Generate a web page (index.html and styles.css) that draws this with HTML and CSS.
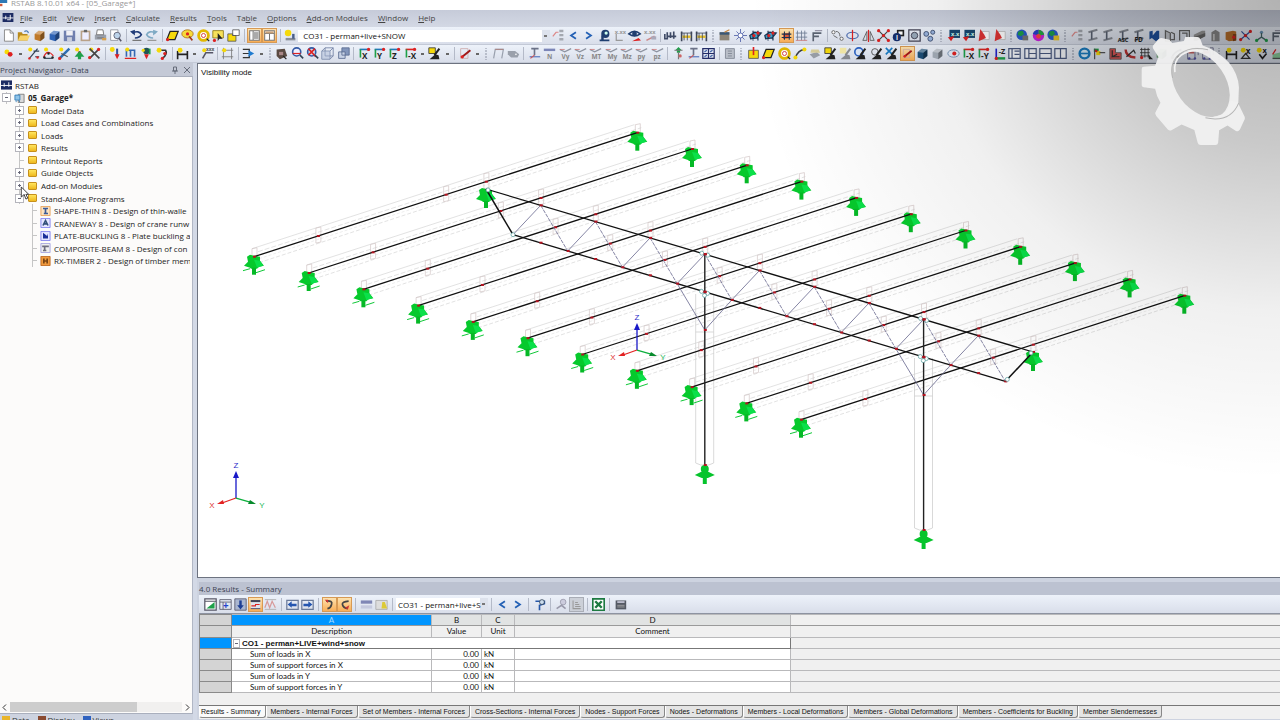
FILE: index.html
```html
<!DOCTYPE html>
<html lang="en">
<head>
    <meta charset="UTF-8">
    <title>RSTAB 8.10.01 x64 - [05_Garage*]</title>
    <link rel="stylesheet" href="styles.css">
</head>
<body>
    <div class="app">
        <header class="titlebar">
            <svg class="app-icon" viewBox="0 0 10 10"><path fill="#2f79b5" d="M0 0h9v5H0z"/><path fill="#d05a3c" d="M0 6h3v3H0z"/></svg>
            <span>RSTAB 8.10.01 x64 - [05_Garage*]</span>
        </header>

        <nav class="menubar">
            <svg class="logo" viewBox="0 0 12 10"><path fill="#1c2b63" d="M0 0h12v10H0z"/><path stroke="#fff" fill="none" d="M0 5.500h12M3.500 3v4M8.500 2v5M5 7.500h4"/></svg>
            <a href="#"><u>F</u>ile</a>
            <a href="#"><u>E</u>dit</a>
            <a href="#"><u>V</u>iew</a>
            <a href="#"><u>I</u>nsert</a>
            <a href="#"><u>C</u>alculate</a>
            <a href="#"><u>R</u>esults</a>
            <a href="#"><u>T</u>ools</a>
            <a href="#">Ta<u>b</u>le</a>
            <a href="#"><u>O</u>ptions</a>
            <a href="#"><u>A</u>dd-on Modules</a>
            <a href="#"><u>W</u>indow</a>
            <a href="#"><u>H</u>elp</a>
        </nav>

        <div class="toolbar" data-icons="new open cube:#c07a2a cube:#2d62b5 save paste print preview | undo redo | plane find ring select window | navigator* table* | loadcase">
            <select class="combo combo-main" aria-label="Load case">
                <option>CO31 - perman+live+SNOW</option>
            </select>
        </div>
        <div class="toolbar" data-icons="node v line poly member support delete | nodal memberload point moment | dim v value | grid | flow v : render zoom zoomred box boxes | axis:X axis:Y axis:Z axis:-X v edit v | pen v : frame tag | section label:N label:Vy label:Vz label:MT label:My label:Mz label:py label:pz | tree section quad | sheet : insert plane ring wire layers edit editpale editblue editdark editcross pen* solid solidpale eye axis:-X axis:-Y axisz layout1 layout2 layout3 layout4 : globe flag bend curve mesh greenbox slope pagered pagered : dim valuex valuev green"></div>

        <div class="workspace">
            <aside class="navigator">
                <h2 class="panel-title">Project Navigator - Data <button class="pin" aria-label="Auto hide"><svg viewBox="0 0 8 8"><path d="M2.500 1h3v4h-3zM1 5h6M4 5v3"/></svg></button><button class="pin" aria-label="Close"><svg viewBox="0 0 8 8"><path d="M1 1l6 6M7 1l-6 6"/></svg></button></h2>
                <ul class="tree">
                    <li class="level-0"><svg class="ico" viewBox="0 0 12 10"><path fill="#1c2b63" d="M0 0h12v10H0z"/><path stroke="#fff" fill="none" d="M0 5.500h12M3.500 3v4M8.500 2v5"/></svg>RSTAB</li>
                    <li class="level-1"><i class="toggle open"></i><svg class="ico" viewBox="0 0 12 12"><path fill="#d9d9d9" stroke="#777" d="M4.500 1.500h7v10h-7z"/><path fill="#8fc3e8" stroke="#2f79b5" d="M.5 2.500h6v6h-6zM2 11v-2M6 11v-2"/></svg><b>05_Garage*</b></li>
                    <li class="level-2"><i class="toggle"></i><i class="folder"></i>Model Data</li>
                    <li class="level-2"><i class="toggle"></i><i class="folder"></i>Load Cases and Combinations</li>
                    <li class="level-2"><i class="toggle"></i><i class="folder"></i>Loads</li>
                    <li class="level-2"><i class="toggle"></i><i class="folder"></i>Results</li>
                    <li class="level-2"><i class="toggle none"></i><i class="folder"></i>Printout Reports</li>
                    <li class="level-2"><i class="toggle"></i><i class="folder"></i>Guide Objects</li>
                    <li class="level-2"><i class="toggle"></i><i class="folder"></i>Add-on Modules</li>
                    <li class="level-2"><i class="toggle open"></i><i class="folder"></i>Stand-Alone Programs</li>
                    <li class="level-3"><i class="toggle none"></i><svg class="ico" viewBox="0 0 12 12"><path fill="#fbe3c4" stroke="#e79a4a" d="M.5.5h11v11H.5z"/><path stroke="#3d5b96" stroke-width="2" fill="none" d="M3 3h6M6 3v6M4 9h5"/></svg>SHAPE-THIN 8 - Design of thin-walle</li>
                    <li class="level-3"><i class="toggle none"></i><svg class="ico" viewBox="0 0 12 12"><path fill="#e6e6ff" stroke="#7777ee" d="M.5.5h11v11H.5z"/><path stroke="#33507a" stroke-width="2" fill="none" d="M3 9l3-6 3 6M4 7h4"/></svg>CRANEWAY 8 - Design of crane runw</li>
                    <li class="level-3"><i class="toggle none"></i><svg class="ico" viewBox="0 0 12 12"><path fill="#e6e6ff" stroke="#7777ee" d="M.5.5h11v11H.5z"/><path fill="#1b2f9a" d="M3 2l5 4 1-3v6H3z"/></svg>PLATE-BUCKLING 8 - Plate buckling a</li>
                    <li class="level-3"><i class="toggle none"></i><svg class="ico" viewBox="0 0 12 12"><path fill="#eee" stroke="#9a9add" d="M.5.5h11v11H.5z"/><path stroke="#6e6e80" stroke-width="2" fill="none" d="M2 4h8M5 4v5M3 9h4"/></svg>COMPOSITE-BEAM 8 - Design of con</li>
                    <li class="level-3"><i class="toggle none"></i><svg class="ico" viewBox="0 0 12 12"><path fill="#f09a3e" stroke="#b85f14" d="M.5.5h11v11H.5z"/><path stroke="#7a4413" stroke-width="2" fill="none" d="M4 3v6M8 3v6M3 6h6"/></svg>RX-TIMBER 2 - Design of timber mem</li>
                </ul>
                <div class="scroll">
                    <svg viewBox="0 0 8 8"><path d="M5 1L2 4l3 3"/></svg>
                    <div class="track"><div class="thumb"></div></div>
                    <svg viewBox="0 0 8 8"><path d="M3 1l3 3-3 3"/></svg>
                </div>
                <div class="nav-tabs">
                    <a href="#"><i class="dot yellow"></i>Data</a>
                    <a href="#"><i class="dot brown"></i>Display</a>
                    <a href="#"><i class="dot blue"></i>Views</a>
                </div>
                <svg class="cursor" viewBox="0 0 10 15"><path fill="#fff" stroke="#333" d="M1 1v11l3-3 2 5 2-1-2-4h3z"/></svg>
            </aside>

            <main class="content">
                <div class="viewport">
                    <svg id="model" viewBox="198 64 1082 512" preserveAspectRatio="xMinYMin meet"></svg>
                </div>

                <section class="results">
                    <h2 class="panel-title">4.0 Results - Summary</h2>
                    <div class="toolbar results-bar" data-icons="chart plus arrowdown diagram* wave | prev next | jump* back* | rows lamp |">
                        <select class="combo combo-small" aria-label="Result case">
                            <option>CO31 - perman+live+S</option>
                        </select>
                    </div>
                    <div class="grid-wrap">
                        <table class="grid">
                            <colgroup>
                                <col class="c-head"><col class="c-desc"><col class="c-value"><col class="c-unit"><col class="c-comment"><col>
                            </colgroup>
                            <thead>
                                <tr class="letters"><th></th><th class="current">A</th><th>B</th><th>C</th><th>D</th><td></td></tr>
                                <tr class="names"><th></th><th>Description</th><th>Value</th><th>Unit</th><th>Comment</th><td></td></tr>
                            </thead>
                            <tbody>
                                <tr class="group"><th class="current"></th><td colspan="4"><i class="toggle open"></i>CO1 - perman+LIVE+wind+snow</td><td></td></tr>
                                <tr><th></th><td>Sum of loads in X</td><td>0.00</td><td>kN</td><td></td><td></td></tr>
                                <tr><th></th><td>Sum of support forces in X</td><td>0.00</td><td>kN</td><td></td><td></td></tr>
                                <tr><th></th><td>Sum of loads in Y</td><td>0.00</td><td>kN</td><td></td><td></td></tr>
                                <tr><th></th><td>Sum of support forces in Y</td><td>0.00</td><td>kN</td><td></td><td></td></tr>
                            </tbody>
                        </table>
                    </div>
                    <div class="tabs">
                        <button class="active">Results - Summary</button>
                        <button>Members - Internal Forces</button>
                        <button>Set of Members - Internal Forces</button>
                        <button>Cross-Sections - Internal Forces</button>
                        <button>Nodes - Support Forces</button>
                        <button>Nodes - Deformations</button>
                        <button>Members - Local Deformations</button>
                        <button>Members - Global Deformations</button>
                        <button>Members - Coefficients for Buckling</button>
                        <button>Member Slendernesses</button>
                    </div>
                </section>
            </main>
        </div>

        <div class="shade"></div>
        <svg class="gear" viewBox="0 0 310 325">
            <path fill="#f1f1f1" fill-opacity=".94" fill-rule="evenodd" d="M36 25L53 6Q58 1 65 4L85 8 93 18 128 12 132 0H168Q174 0 177 7L184 25Q225 38 262 76 290 110 292 150L290 198 309 238Q311 244 307 250L295 276Q290 284 283 280L258 264 233 278 230 315Q229 322 222 322H178Q171 322 169 315L159 277 121 261 92 277Q86 281 80 276L46 236Q40 228 44 223L58 196Q46 176 42 154L8 150Q2 149 2 144V96Q2 89 8 89L42 86 52 60 36 34Q34 29 36 25ZM115 50A78 110 -35 0 0 241 230A78 110 -35 0 0 115 50Z"/>
            <path fill="none" stroke="#b4b4b4" stroke-width="3" d="M94 122C80 60 130 22 200 38M291 197C276 234 245 252 192 241"/>
            <path fill="none" stroke="#f1f1f1" stroke-width="5" d="M101 105C95 60 130 34 185 42"/>
            <path fill="#f1f1f1" d="M289 195Q268 243 215 237 262 235 267 190z"/>
        </svg>
    </div>
    <script src="script.js"></script>
</body>
</html>
```

FILE: styles.css
```css
* {
    box-sizing: border-box;
}

body {
    margin: 0;
    font-family: "Open Sans", "Noto Sans", sans-serif;
    font-size: 8px;
    color: #222;
    background: #cdd3e0;
}

button {
    padding: 0;
    border: none;
    background: none;
    font: inherit;
    color: inherit;
}

.app {
    position: relative;
    display: flex;
    flex-direction: column;
    height: 100vh;
    overflow: hidden;
}

.titlebar {
    display: flex;
    align-items: center;
    gap: 3px;
    flex: none;
    height: 10px;
    line-height: 4px;
    font-size: 8px;
    color: #999;
    background: #fff;
    overflow: hidden;
}

.titlebar span {
    margin-top: -5px;
}

.app-icon {
    width: 8px;
    height: 8px;
    margin-top: -5px;
}

.menubar {
    display: flex;
    align-items: center;
    gap: 10px;
    flex: none;
    height: 17px;
    padding: 0 0 2px 2px;
    background: linear-gradient(#c6cbd9, #d3d8e4);
}

.menubar a {
    color: #444;
    text-decoration: none;
    white-space: nowrap;
}

.menubar .logo {
    width: 12px;
    height: 9px;
    margin-right: -4px;
}

.toolbar {
    display: flex;
    justify-content: space-between;
    align-items: center;
    flex: none;
    height: 18px;
    margin-right: -5px;
    padding-left: 1px;
    background: linear-gradient(#edf2fa, #d9deea);
    border-bottom: 1px solid #c3c9d6;
}

.tool {
    flex: none;
    width: 15px;
    height: 15px;
    padding: 1px;
}

.tool svg {
    display: block;
    width: 13px;
    height: 13px;
    overflow: visible;
}

.tool.on {
    background: linear-gradient(#fde3b0, #f9ae57);
    border: 1px solid #d79a54;
    padding: 1px;
}

.tool.pressed {
    background: #ccd0d8;
    border: 1px solid #a9adb6;
    padding: 1px;
}

.tool.on svg,
.tool.pressed svg {
    width: 11px;
    height: 11px;
}

.arrow {
    flex: none;
    width: 9px;
    height: 2px;
    background: linear-gradient(#666, #666) center / 3px 2px no-repeat;
}

.sep {
    flex: none;
    width: 5px;
    height: 13px;
    background: linear-gradient(#b4bac8, #b4bac8) center / 1px 100% no-repeat;
}

.grip {
    flex: none;
    width: 8px;
    height: 12px;
    background: radial-gradient(circle, #8d93a3 1px, transparent 1px) center / 8px 3px;
}

.combo {
    flex: none;
    height: 12px;
    padding: 0 2px;
    font: inherit;
    color: #111;
    border: none;
    border-radius: 0;
    appearance: none;
    background: linear-gradient(#777, #777) right 3px center / 3px 2px no-repeat, linear-gradient(#dde2ec, #dde2ec) right / 8px 100% no-repeat #fff;
}

.combo-main {
    width: 252px;
    padding-left: 5px;
}

.combo-small {
    width: 92px;
}

.workspace {
    display: flex;
    flex: 1;
    min-height: 0;
}

.panel-title {
    display: flex;
    align-items: center;
    gap: 4px;
    flex: none;
    height: 13px;
    margin: 0;
    font-size: 8px;
    font-weight: normal;
    color: #3c4353;
    background: #bcc2d1;
}

.navigator {
    position: relative;
    display: flex;
    flex-direction: column;
    flex: none;
    width: 197px;
    border-right: 4px solid #d3d9e6;
    overflow: hidden;
}

.navigator .panel-title {
    background: #c4c9d6;
}

.pin {
    width: 8px;
    height: 8px;
}

.pin:first-of-type {
    margin-left: auto;
}

.pin:last-of-type {
    margin-right: 2px;
}

.pin svg {
    display: block;
    fill: none;
    stroke: #666c7a;
}

.tree {
    display: grid;
    grid-template-rows: repeat(15, 1fr);
    height: 188px;
    margin: 0;
    padding: 2px 0 0;
    list-style: none;
    box-sizing: content-box;
    background: #fcfbfa;
    border-right: 1px solid #b1b7c5;
    border-top: 1px solid #a9afbd;
}

.tree li {
    display: flex;
    align-items: center;
    gap: 3px;
    margin-right: 2px;
    overflow: hidden;
    white-space: nowrap;
}

.level-0 {
    padding-left: 1px;
}

.level-1 {
    padding-left: 2px;
}

.level-2 {
    padding-left: 15px;
}

.level-3 {
    padding-left: 28px;
}

.ico {
    flex: none;
    width: 11px;
    height: 10px;
}

.folder {
    flex: none;
    width: 9px;
    height: 8px;
    margin: 0 1px;
    border: 1px solid #c6901c;
    border-radius: 1px;
    background: linear-gradient(#ffe55e, #efb81d);
}

.toggle {
    display: flex;
    align-items: center;
    justify-content: center;
    flex: none;
    width: 9px;
    height: 100%;
    background: linear-gradient(#c5c5c5, #c5c5c5) 4px 0 / 1px 100% no-repeat, linear-gradient(#c5c5c5, #c5c5c5) right center / 5px 1px no-repeat;
}

.toggle::before {
    content: "";
    width: 7px;
    height: 7px;
    border: 1px solid #b5b5bc;
    background: linear-gradient(#667, #667) center / 3px 1px no-repeat, linear-gradient(#667, #667) center / 1px 3px no-repeat #fff;
}

.toggle.open::before {
    background: linear-gradient(#667, #667) center / 3px 1px no-repeat #fff;
}

.toggle.none::before {
    display: none;
}

.scroll {
    display: flex;
    align-items: flex-end;
    flex: 1;
    padding-bottom: 1px;
    background: #fcfbfa;
    border-right: 1px solid #b1b7c5;
    border-bottom: 1px solid #a9afbd;
}

.scroll svg {
    width: 8px;
    height: 9px;
    fill: none;
    stroke: #333;
    margin: 0 1px;
}

.track {
    flex: 1;
    height: 10px;
    background: #f1f0ef;
}

.thumb {
    width: 74%;
    height: 100%;
    background: #cdcdcd;
}

.nav-tabs {
    display: flex;
    gap: 8px;
    height: 6px;
    padding-left: 2px;
    line-height: 12px;
    overflow: hidden;
}

.nav-tabs a {
    display: flex;
    gap: 2px;
    color: #333;
    text-decoration: none;
}

.dot {
    width: 8px;
    height: 6px;
    margin-top: 2px;
}

.yellow { background: #e9b52a; }
.brown { background: #8a4a30; }
.blue { background: #2f62c0; }

.cursor {
    position: absolute;
    left: 20px;
    top: 123px;
    width: 10px;
    height: 14px;
}

.content {
    display: flex;
    flex-direction: column;
    flex: 1;
    min-width: 0;
}

.viewport {
    flex: 1;
    min-height: 0;
    background: #fff;
    border: 1px solid #6d7380;
    border-width: 1px 0 1px 1px;
}

.viewport svg {
    display: block;
    width: 100%;
    height: 100%;
}

.results {
    flex: none;
    padding-top: 4px;
    padding-left: 2px;
    font-family: "Liberation Sans", Arial, sans-serif;
}

.results .panel-title {
    font-family: "Open Sans", sans-serif;
}

.results-bar {
    justify-content: flex-start;
    height: 19px;
    padding-left: 4px;
    font-family: "Open Sans", sans-serif;
    border-bottom: 1px solid #8d93a1;
}

.results-bar .sep {
    width: 7px;
}

.grid-wrap {
    height: 91px;
    background: #f0f0f0;
}

.grid {
    width: 100%;
    table-layout: fixed;
    border-collapse: collapse;
    font-family: Lato, "Liberation Sans", sans-serif;
    color: #111;
}

.c-head { width: 32px; }
.c-desc { width: 200px; }
.c-value { width: 50px; }
.c-unit { width: 33px; }
.c-comment { width: 276px; }

.grid tr {
    height: 11px;
}

.grid th,
.grid td {
    padding: 0;
    line-height: 9px;
    font-weight: normal;
    white-space: nowrap;
    border: 1px solid #b9b9bb;
}

.grid tbody td {
    background: #fff;
}

.grid tr td:last-child {
    background: none;
    border-right: none;
}

.grid .letters th,
.grid .letters td {
    background: #e1e3e3;
    border-bottom-color: #9a9a9a;
}

.grid .names th {
    background: #f0f0f0;
    padding: 1px 0;
}

.grid th:first-child {
    background: #d4d4d4;
    border-color: #8a8a8a;
}

.grid .letters th.current {
    color: #a8dcff;
    background: #0095ff;
}

.grid th.current:first-child {
    background: #0095ff;
}

.grid tbody td:nth-child(2) {
    padding-left: 18px;
}

.grid tbody td:nth-child(3) {
    padding-right: 2px;
    text-align: right;
}

.grid tbody td:nth-child(4) {
    padding-left: 2px;
}

.grid .group td:nth-child(2) {
    padding-left: 1px;
    font-family: "Liberation Sans", Arial, sans-serif;
    font-weight: bold;
    border-color: #777;
}

.group .toggle {
    display: inline-flex;
    width: 7px;
    height: 7px;
    margin-right: 2px;
    background: none;
    vertical-align: middle;
}

.tabs {
    display: flex;
    height: 15px;
    padding-bottom: 2px;
    font-size: 7px;
    background: linear-gradient(#f0f0f0, #f0f0f0) top / 100% 13px no-repeat;
    border-top: 1px solid #777;
}

.tabs button {
    flex: none;
    height: 12px;
    padding: 0 4px;
    white-space: nowrap;
    color: #111;
    background: #e4e4e4;
    border: 1px solid #888;
    border-top: none;
    border-left-color: #fff;
    border-radius: 0 0 3px 3px;
}

.tabs .active {
    padding-left: 1px;
    background: #fafafa;
}

/* soft darkening toward the top right corner */
.shade {
    position: absolute;
    inset: 0;
    pointer-events: none;
    background: radial-gradient(ellipse 530px 480px at 100% 0, rgba(0, 0, 0, .3), rgba(0, 0, 0, .21) 30%, rgba(0, 0, 0, .06) 65%, transparent);
}

.gear {
    position: absolute;
    top: 37px;
    right: 35px;
    width: 104px;
    height: 109px;
    pointer-events: none;
}
```

FILE: script.js
```js
// path helpers for the 16x16 toolbar icons
const f = (c, d) => `<path fill="${c}" d="${d}"/>`;
const s = (c, d, w = 1.5) => `<path fill="none" stroke="${c}" stroke-width="${w}" d="${d}"/>`;
const t = (c, x, y, txt, size = 9) => `<text x="${x}" y="${y}" font-size="${size}" font-weight="bold" fill="${c}">${txt}</text>`;
const dots = (c, pts, r = 2) => pts.map(p => `<circle cx="${p[0]}" cy="${p[1]}" r="${r}" fill="${c}"/>`).join('');

const red = '#d22', yel = '#f5d90a', dk = '#222', gry = '#8a8f98', grn = '#1fa04a';
const pen = f(dk, 'M3 14l6-5 4 1 1 5H2z') + s(dk, 'M14 2L8 10', 2.500);
const beam = s(gry, 'M3 4l11-3M3 14l11-3', 2.500) + s('#5a6373', 'M7 3v10', 2);
const cube = c => f(c, 'M2 6l5-4 7 1v8l-5 4-7-2z') + f('rgba(0,0,0,.35)', 'M9 7l5-4v8l-5 4z') + f('rgba(255,255,255,.35)', 'M2 6l5-4 7 1-5 4z');
const globe = c => `<circle cx="7" cy="7" r="6.500" fill="#2a5bd0"/>` + f(grn, 'M3 3l5-1 2 4-4 3-4-2z') + f(c, 'M8 8h7v6H8z');
const layout = d => f('#f4f6fa', 'M1 2h14v12H1z') + s('#4b5a80', 'M1 2h14v12H1z' + d);

const icons = {
    new: f('#fff', 'M3 1h7l4 4v10H3z') + s('#777', 'M3 1h7l4 4v10H3zM10 1v4h4', 1),
    open: f('#b98a1c', 'M1 4h5l1 2h6v8H1z') + f('#f7d268', 'M4 8h12l-3 6H1z') + s('#4a78b0', 'M9 3q4-2 5 2'),
    cube: cube,
    save: f('#6f7fae', 'M1 2h14v13H1z') + f('#f0f0f5', 'M4 2h8v6H4z') + f('#c8cedd', 'M5 10h6v5H5z'),
    paste: f('#b9a188', 'M2 2h12v13H2z') + f('#eef', 'M4 4h8v9H4z') + f('#666', 'M6 1h4v3H6z'),
    print: f('#9aa0ab', 'M1 7h14v6H1z') + f('#fff', 'M4 1h7l1 6H3z') + s('#666', 'M4 1h7l1 6H3zM4 11h8', 1) + f('#d8a04c', 'M10 11h5v3h-5z'),
    preview: f('#fff', 'M2 1h9v13H2z') + s('#8a8f98', 'M2 1h9v13H2z', 1) + '<circle cx="10" cy="8" r="4" fill="#bdd4ea" stroke="#556"/>' + s('#556', 'M12 11l3 4', 2),
    undo: s('#1f3b78', 'M3 5q8-4 11 2-2 4-8 4', 2) + f('#1f3b78', 'M0 3l6-2v7z') + s('#777', 'M3 14h11'),
    redo: s('#7faac4', 'M13 5Q5 1 2 7q2 4 8 4', 2) + f('#7faac4', 'M16 3l-6-2v7z') + s('#999', 'M3 14h11'),
    plane: f(yel, 'M5 3h10l-4 10H1z') + s(dk, 'M5 3h10l-4 10H1z') + dots(red, [[2, 13]]),
    find: '<ellipse cx="8" cy="6" rx="7" ry="5" fill="#f7da3a" stroke="#a66a1c"/>' + s('#a23a18', 'M10 9l4 5', 2) + dots(red, [[8, 6]]),
    ring: '<circle cx="8" cy="8" r="6" fill="#fff" stroke="#e2b800" stroke-width="3.500"/><circle cx="8" cy="8" r="2.500" fill="none" stroke="#c22"/>' + s(dk, 'M12 12l3 3'),
    select: f('#f7e15a', 'M1 2h13v9H1z') + s('#8a7410', 'M1 2h13v9H1z', 1) + f(dk, 'M7 5l6 7H9l-2 3z') + dots(red, [[3, 14]]),
    window: f(yel, 'M1 6h10v9H1z') + f('#fff', 'M7 1h8v7H7z') + s('#555', 'M7 1h8v7H7zM1 6h6v2h4v7H1z', 1),
    navigator: f('#fff', 'M1 1h14v14H1z') + s('#777', 'M1 1h14v14H1zM6 1v14') + f('#aaa', 'M7 3h7v10H7z'),
    table: f('#fff', 'M1 1h14v14H1z') + s('#777', 'M1 1h14v14H1zM1 5h14M8 5v10') + f('#c9a27a', 'M2 2h12v3H2z'),
    loadcase: dots(yel, [[5, 5]], 4) + f(gry, 'M2 11h12v3H2z') + f('#4a5f8a', 'M10 6h3v6h-3z'),
    callout: s('#d88', 'M1 9l4-5h3') + f('#a4a8b0', 'M9 1h5v3H9zM9 6h5v3H9zM9 11h5v3H9z'),
    lt: s('#2461b5', 'M11 4L5 8l6 4', 2.200),
    gt: s('#2461b5', 'M5 4l6 4-6 4', 2.200),
    ball: dots('#1f3e70', [[9, 6]], 5) + f('#1f3e70', 'M2 13h12v2H2zM4 8h3v6H4z') + dots('#cfe', [[10, 5]]),
    xxx: s('#999', 'M4 6v8h8') + t('#999', 2, 6, 'x.xx', 7),
    eyered: s('#1f3e70', 'M1 6q7-6 14 0-7 5-14 0z', 2) + dots('#1f3e70', [[8, 6]], 3) + f(red, 'M5 15l8-4 3 3z'),
    xred: t('#999', 0, 6, 'x.xx', 7) + s('#c88', 'M3 14l10-5', 2) + f('#aab', 'M9 9h6v4H9z'),
    fork: s('#3f4b66', 'M1 6v6h3V4M8 4v7M12 3v9M5 9h10', 2),
    gridbar: f('#3e4658', 'M1 3h2v12H1zM13 3h2v12h-2z') + f('#e2bc2a', 'M3 8h10v3H3z') + s('#3e4658', 'M1 5h14M5 5v9M9 5v9', 1),
    image: f('#8d8577', 'M2 4h12v10H2z') + f('#3a5775', 'M2 4h12v3H2z') + s('#c7853b', 'M8 4l6-3'),
    snow: s('#4d5fa8', 'M8 0v16M0 8h16M3 3l10 10M13 3L3 13', 1) + '<circle cx="8" cy="8" r="3" fill="#fff" stroke="#4d5fa8"/>',
    plate: f('#3aa0c8', 'M1 8l6-4 8 1-5 6-8 1z') + s('#1c3350', 'M1 8l6-4 8 1-5 6-8 1zM5 2v12M11 2v12') + dots(red, [[6, 8], [11, 5]]),
    platered: f('#e05a3a', 'M3 5l10-1v8l-10 1z') + s('#1c3350', 'M1 6h14M1 11h14M5 2v12M12 2v12'),
    mesh2: s('#6d7b92', 'M3 2v12M8 2v12M12 2v12M1 5h14M1 10h14', 1) + s('#c77', 'M1 14h14', 1),
    pipe: s('#5b6472', 'M4 15V5h10M4 9h7', 2) + s('#99a', 'M6 2h9'),
    chain: '<circle cx="3" cy="4" r="2" fill="#fff" stroke="#555"/><circle cx="13" cy="12" r="2" fill="#fff" stroke="#555"/>' + s('#555', 'M6 3q5 0 5 6M3 8l5 3', 1),
    rotate: '<ellipse cx="8" cy="8" rx="7" ry="4" fill="none" stroke="#4a6cb0" stroke-width="1.500"/>' + s(red, 'M8 1v14'),
    mirror: s('#555', 'M6 3v11H1zM10 3v11h5z', 1) + s(red, 'M8 1v15'),
    cross: s('#444', 'M2 2l12 12M14 2L2 14') + dots(red, [[2, 2], [14, 2], [2, 14], [14, 14], [8, 8]], 2),
    info: f(dk, 'M6 1h9v8H6z') + f('#fff', 'M8 3h5v4H8z') + dots('#17306e', [[6, 10]], 5) + t('#fff', 5, 14, 'i', 8),
    target: s('#445', 'M1 1h14v14H1z') + '<circle cx="8" cy="8" r="4" fill="#9ab" stroke="#334"/>',
    nodes3: '<circle cx="4" cy="6" r="3" fill="#99b3dd" stroke="#346"/><circle cx="12" cy="4" r="2.500" fill="#99b3dd" stroke="#346"/><circle cx="9" cy="12" r="3" fill="#99b3dd" stroke="#346"/>',
    screen: f('#18476f', 'M3 1h13v10H3z') + t('#cfe', 5, 9, 'x.x', 7) + f(red, 'M1 10l8-1-4 6z'),
    pdf: f('#fff', 'M6 3h9v10H6z') + s('#bbb', 'M6 3h9v10H6z', 1) + f('#d33', 'M4 0l5 7 2 4-9 4z'),
    globe1: globe('#777'),
    globe2: '<circle cx="8" cy="8" r="7" fill="#c2d"/>' + f('#24c', 'M1 6q2-5 7-5v7z') + f('#2a4', 'M8 1q6 1 7 6l-7 1z') + dots('#f44', [[8, 9]], 3),
    globe3: globe('#e6c52a'),
    beam: beam,
    beamA: beam + t(dk, 1, 16, 'ASC', 7),
    beamF: beam + t(dk, 3, 16, 'FD', 8),
    bluebeam: f('#1c4f9c', 'M3 3l4-1v6l5-6h3v10l-4 3-5-4-3 2z'),
    prism: f('#c5c8ce', 'M3 3l7 3v8l-7 1z') + s('#666', 'M3 2v13h6V5zM10 4l4 2v7h-4', 1.500),
    channel: s('#666', 'M2 14V2h12v9M5 5h6v7', 1.500),
    log: f('#999', 'M1 7l10-5h4v7L5 14H1z') + f('#666', 'M1 10l14-5v4L5 14H1z'),
    bucket: f('#888', 'M3 4l5-3 5 3v11H3z') + f('#ccc', 'M5 6h2v8H5z'),
    timber: f('#b86f2c', 'M2 4l9-2 4 1v11l-9 1-4-2z') + f('#7f461a', 'M11 6h4v8l-4 1z') + dots(red, [[12, 10]]),
    joint: s('#33529e', 'M2 13L14 3M3 3l10 10') + dots(red, [[2, 13], [14, 3], [8, 8]]),
    tripod: dots('#6b94b8', [[8, 4]]) + s('#466', 'M8 5v5l-6 4M8 10l6 4') + dots(grn, [[2, 14], [14, 14]]),
    node: dots(yel, [[6, 6]], 3) + dots(red, [[10, 9]], 3),
    line: dots(yel, [[4, 3]], 2.500) + s('#345', 'M3 14L13 2M8 5h7M10 12h5') + dots(red, [[3, 14], [13, 13]], 1.500),
    poly: dots(yel, [[5, 3]], 2.500) + s(red, 'M2 13q4-12 12-2') + s('#456', 'M3 14h10') + dots(dk, [[3, 13], [13, 13], [8, 8]], 1.500),
    member: dots(yel, [[4, 3]], 2.500) + s('#2e6db0', 'M2 14L14 2', 3) + s('#555', 'M4 8l8 4') + dots(red, [[2, 14]]),
    support: dots(yel, [[5, 3]], 2.500) + dots(red, [[8, 7]]) + f(grn, 'M8 5l6 7h-4v3H6v-3H2z'),
    delete: dots(yel, [[4, 3]], 2.500) + s('#444', 'M2 2l12 12M14 2L2 14', 2) + dots(red, [[2, 13], [13, 3]]),
    nodal: dots(yel, [[4, 3]], 3) + s('#33529e', 'M10 2v10', 2.500) + f(red, 'M7 9h6l-3 6z'),
    memberload: s('#3668b2', 'M2 4h12M3 4v8M8 4v8M13 4v8', 2) + dots(yel, [[4, 3]], 2.500) + s(red, 'M1 14h14'),
    point: dots('#255', [[8, 5]], 4) + dots(yel, [[4, 4]]) + f(red, 'M5 9h6l-3 6z') + s(grn, 'M12 2v7', 2),
    moment: s('#333', 'M3 4h10q3 5-4 10', 2) + dots(yel, [[5, 4]], 3) + dots(red, [[9, 14], [12, 8]]),
    dim: s(dk, 'M2 5v10M14 5v10M2 9h12', 2) + dots(yel, [[5, 4]], 3),
    value: s('#556', 'M2 14l4-7h9', 2) + dots(yel, [[4, 4]], 2.500) + t('#555', 6, 5, 'xxx', 6),
    grid: s('#777', 'M3 1v14M13 1v14M1 4h14M1 12h14', 1) + dots(yel, [[4, 4]], 2.500),
    flow: s('#333', 'M1 3h8v3M1 13h8v-3M1 8h8') + f('#1e7bd0', 'M8 4l7 4-7 4z'),
    render: f('#5a4a42', 'M2 3l10-1 3 9-9 4-4-4z') + f('#a88', 'M5 6h5v4H5z') + s('#222', 'M10 11l4 4'),
    zoom: '<circle cx="7" cy="6" r="5" fill="#eef" stroke="#345aa5" stroke-width="2"/>' + s(red, 'M2 8h10') + s('#345', 'M11 10l4 4', 2),
    zoomred: '<circle cx="7" cy="6" r="5" fill="#cde" stroke="#345aa5" stroke-width="2"/>' + s(red, 'M3 2l9 10M11 2l-8 8', 2) + s('#345', 'M11 10l4 4', 2),
    box: s('#6c7ca0', 'M1 5h10v10H1zM5 1h10v10H5zM1 5l4-4M11 5l4-4M11 15l4-4', 1) + f('#a9b9d577', 'M1 5h10v10H1z'),
    boxes: f('#8396bb', 'M6 1h9v9H6z') + f('#c9d3e6', 'M2 6h8v8H2z') + s('#56698e', 'M6 1h9v9H6zM2 6h8v8H2z', 1),
    axis: n => s(n.startsWith('-') ? red : '#27b', 'M2 3h12', 2) + s(grn, 'M3 3v10', 2) + dots(red, [[13, 3]]) + t('#222', 5, 15, n, 10),
    axisz: s(grn, 'M4 14h11', 3) + s('#22c', 'M4 14V2', 2) + dots(red, [[4, 14]]) + t('#222', 7, 9, '-Z', 9),
    edit: f(yel, 'M1 1h8v7H1z') + s('#333', 'M1 1h8v7H1z', 1) + pen,
    editpale: f('#f5eaa8', 'M1 1h8v7H1z') + `<g opacity=".45">${pen}</g>`,
    editblue: '<circle cx="6" cy="6" r="5" fill="#dfeafa" stroke="#2b62c4" stroke-width="2"/>' + pen,
    editdark: '<circle cx="6" cy="6" r="4" fill="none" stroke="#444"/>' + pen,
    editcross: s('#1a7cc4', 'M1 1l8 8M9 1L1 9', 2) + pen,
    pen: s('#caa', 'M2 2h9v12H2z', 1) + s('#a01818', 'M4 12L14 4', 2.500) + dots(red, [[4, 12]]),
    frame: s('#9aa1ae', 'M2 14L4 3h10l-2 11', 1.500) + s('#a88', 'M4 3h10'),
    tag: f('#9aa0ab', 'M1 5h9l5 4-2 4H5L1 9z') + dots('#fff', [[11, 9]], 1),
    section: s('#6b7287', 'M4 2h9M8 2v8', 2) + s('#5a7ac0', 'M2 12h13') + s('#c55', 'M3 14l5-4'),
    label: n => (n == 'N' ? f('#7c86b8', 'M1 2h14v3H1z') : s('#8d93a0', 'M1 3l6 3 8-4') + s('#c77', 'M1 3h6', 1)) + t('#888', n == 'N' ? 5 : 3, 15, n, 8),
    tree: f(grn, 'M8 0l4 4h-2v3H6V4H4z') + s('#777', 'M3 4h10M8 6v9', 1.500) + dots('#c66', [[10, 11]]),
    quad: s('#222b66', 'M1 2h14v12H1zM8 2v12M1 8h14', 1.500) + s('#46a', 'M3 6l3-2M10 6l3-2M3 12l3-2M10 12l3-2', 1.500),
    sheet: f('#b9bec8', 'M3 2h11v12H3z') + s('#7a818f', 'M3 2h11v12H3zM6 5h5M6 8h5M6 11h5', 1),
    insert: f(yel, 'M2 4h12v10H2z') + s('#555', 'M2 4h12v10H2z', 1) + s(red, 'M8 0v10', 2),
    wire: s('#3b4048', 'M3 13Q6 4 14 3', 2) + dots(yel, [[3, 13], [14, 3]], 2.500),
    layers: f('#9aa0a8', 'M2 9l9-3 4 4-8 4z') + f('#d9cf9a', 'M4 3h9l2 4H3z'),
    solid: cube('#1d4f78'),
    solidpale: cube('#a4adb8'),
    eye: '<ellipse cx="8" cy="8" rx="7" ry="4.500" fill="#e4ebf7" stroke="#68a"/>' + dots(red, [[9, 8]], 2.500),
    layout1: layout('M5 2v12M8 5h6M8 9h6'),
    layout2: layout('M6 2v12M6 8h9'),
    layout3: layout('M1 8h14'),
    layout4: layout('M8 2v12'),
    globe: '<circle cx="8" cy="8" r="6" fill="#d7ecfa" stroke="#1b7cc0" stroke-width="3"/>' + f('#1b7cc0', 'M3 7h10v2H3z'),
    flag: f(grn, 'M1 2h6v4H1z') + f(yel, 'M4 5h5v5H4z') + s('#555', 'M2 15V2M8 7h7') + dots(red, [[4, 5]], 1.500),
    bend: f('#d55', 'M1 2h7v5h7v8H1z') + s('#333', 'M3 12h10M4 4v8l6-3') + s('#555', 'M1 2h7v5h7v8H1z', 1),
    curve: s('#b33', 'M2 3q0 9 12 10', 3) + s('#333', 'M3 12l9-8 2 4'),
    mesh: s('#333', 'M2 1v12M6 1v12M10 1v12M0 3h12M0 7h12M0 11h12', 1) + f(dk, 'M10 9l6 6h-5z') + dots(red, [[2, 13]]),
    greenbox: cube('#7fb58a'),
    slope: s('#334', 'M2 14q2-8 12-11', 2) + dots('#777', [[3, 13], [10, 12]]),
    pagered: s('#668', 'M2 4h9v11H2zM11 1h4v9', 1) + f('#c66', 'M3 5h7v3H3z') + dots('#55a', [[4, 14], [11, 14]], 1.500),
    valuex: dots(yel, [[4, 4]], 3) + t('#222', 7, 8, 'x', 10) + s('#333', 'M2 14l5-6 5 6z'),
    valuev: dots(yel, [[4, 4]], 3) + t('#222', 8, 7, 'x', 9) + s('#222', 'M4 9l4 5 5-6', 2),
    green: f('#8ccf9c', 'M2 9l13-3v9H2z') + s(red, 'M2 9l4-6') + s('#555', 'M2 14h13'),
    chart: f('#fff', 'M1 1h14v14H1z') + s('#556', 'M1 1h14v14H1zM1 4h14') + f(grn, 'M3 13l10-8v8z'),
    plus: s('#556', 'M1 2h14v12H1zM1 5h14M5 5v9', 1) + t('#24c', 5, 13, '+', 12),
    arrowdown: f('#aab6d0', 'M1 1h14v14H1z') + s('#556', 'M1 1h14v14H1z', 1) + s('#1c3e94', 'M8 3v7', 3) + f('#1c3e94', 'M4 9h8l-4 5z'),
    diagram: f('#dfe4ee', 'M1 2h14v12H1z') + s('#445', 'M1 3h14', 3) + s(red, 'M2 10h6V8h6', 1.500) + s('#557', 'M1 14h14'),
    wave: s('#d79a9a', 'M1 12l3-8 3 8 3-8 4 8') + s('#aaa', 'M1 2h14M1 14h14', 1),
    prev: s('#6a7a99', 'M1 3h14v11H1z') + f('#2556b0', 'M2 8l5-4v3h6v3H7v2z'),
    next: s('#6a7a99', 'M1 3h14v11H1z') + f('#2556b0', 'M14 8L9 4v3H3v3h6v2z'),
    jump: s('#444', 'M3 3q10-1 8 5-1 5-6 6', 2.500) + f('#c33', 'M1 1h5v5z'),
    back: s('#444', 'M14 3Q4 4 5 8q1 5 8 6', 2.500) + f('#c33', 'M15 9l-2 6-5-2z'),
    rows: f('#7f86b5', 'M1 3h14v4H1z') + f('#c5c9de', 'M1 9h14v4H1z'),
    lamp: f('#ddd', 'M1 3h14v11H1z') + s('#aaa', 'M1 3h14v11H1z', 1) + f('#dcca35', 'M9 5h3l3 8H8z'),
    filter: s('#2456a8', 'M3 4h11v3L8 9v6', 2) + '<circle cx="11" cy="5" r="3" fill="#cde" stroke="#345"/>',
    person: '<circle cx="10" cy="5" r="3.500" fill="#ccd" stroke="#99a"/>' + s('#99a', 'M2 13l6-4 5 4', 2),
    cells: s('#999', 'M3 2v12h11M6 5h4M6 8h6M6 11h8'),
    excel: f('#fff', 'M1 1h14v14H1z') + s('#1d7a41', 'M1 1h14v14H1z', 2) + s('#1d7a41', 'M4 4l8 8M12 4l-8 8', 3),
    calc: f('#555a64', 'M2 3h13v11H2z') + f('#ccd', 'M4 4h9v2H4z') + s('#aaa', 'M4 9h9M4 11h9', 1)
};

function makeTool(token) {
    const el = document.createElement(/^[|:v]$/.test(token) ? 'i' : 'button');
    if (token === '|') {
        el.className = 'sep';
    } else if (token === ':') {
        el.className = 'grip';
    } else if (token === 'v') {
        el.className = 'arrow';
    } else {
        const [name, arg] = token.replace(/[*!]$/, '').split(':');
        const icon = icons[name];
        el.className = 'tool' + (token.endsWith('*') ? ' on' : token.endsWith('!') ? ' pressed' : '');
        el.setAttribute('aria-label', arg ? name + ' ' + arg : name);
        el.innerHTML = `<svg viewBox="0 0 16 16">${typeof icon === 'function' ? icon(arg) : icon}</svg>`;
    }
    return el;
}

// buttons listed in data-icons go before the combo box, the rest after it
const after = [
    'callout lt gt ball xxx eyered xred | fork gridbar gridbar : image snow plate plate platered* mesh2 pipe | chain rotate mirror cross info target nodes3 : screen screen pdf pdf : globe1 globe2 globe3 : callout beam beam beamA beamF bluebeam prism channel log bucket timber joint tripod pipe',
    '',
    '| lt gt | filter | person cells! | excel | calc'
];

document.querySelectorAll('.toolbar').forEach((bar, i) => {
    const combo = bar.querySelector('select');
    bar.dataset.icons.split(' ').forEach(tok => bar.insertBefore(makeTool(tok), combo));
    after[i].split(' ').filter(Boolean).forEach(tok => bar.appendChild(makeTool(tok)));
});

// ---- structural model ----
const DX = 54.7, DY = 16.3;
const out = [];
const line = (a, b, c, w = 1, extra = '') => out.push(`<line x1="${a[0]}" y1="${a[1]}" x2="${b[0]}" y2="${b[1]}" stroke="${c}" stroke-width="${w}" ${extra}/>`);
const off = (p, x, y) => [p[0] + x, p[1] + y];
const beamStart = i => [254 + DX * i, 256.7 + DY * i];
const along = (i, k) => off(beamStart(i), 383.3 * k, -124 * k);
const upper = i => [486 + DX * i, 189 + DY * i];
const lower = i => [513 + DX * i, 234.7 + DY * i];
const mark = p => out.push(`<rect x="${p[0] - 1}" y="${p[1] - 1}" width="3" height="2" fill="#b3121f"/>`);
const hinge = (p, x, y) => out.push(`<circle cx="${p[0] + x}" cy="${p[1] + y}" r="2" fill="#fff" stroke="#4f9a9a" stroke-width=".7"/>`);

function support(p, slide) {
    const [x, y] = p;
    out.push(`<g transform="translate(${x} ${y})">
        <path fill="#06c92c" d="M-7 0l3-2 4 1 6 1v4l4 5-5 1-2 2h-6l-1-1-6-2 4-4z"/>
        <path fill="#0be04a" d="M0 3l6 1 3 5-6 2z"/><path fill="#05b926" d="M-2 11h4v7h-4z"/>
        ${slide ? '<path stroke="#10c838" fill="none" d="M-11 14l7-2M2 16l9-3"/>' : ''}</g>`);
}

for (let i = 0; i <= 10; i++) {
    const a = beamStart(i), b = along(i, 1), g = '#dadada';
    line(off(a, -2, -8), off(b, -3, -8), g, .8);
    line(off(a, 4, -5), off(b, 4, -5), g, .8, 'stroke-dasharray="5 2"');
    line(off(a, 5, 6), off(b, 4, 5), g, .8, 'stroke-dasharray="4 2"');
    line(off(a, 5, 2), off(b, 3, 2), '#e8e8e8', .8, 'stroke-dasharray="3 2"');
    [0, 1 / 6, .5, .605, 1].forEach(k => {
        const [x, y] = along(i, k);
        out.push(`<path fill="none" stroke="#d2c6c6" stroke-width=".7" d="M${x - 2} ${y - 8}l5-1v15l-5 1z"/>`);
    });
}

// column outlines
[[704.7, 294, 465], [923.5, 358, 530]].forEach(([x, y1, y2]) => {
    out.push(`<path fill="none" stroke="#cfcfcf" stroke-width=".8" d="M${x - 9} ${y1}V${y2 - 2}l5 2h8l5-2V${y1}M${x - 9} ${y1 + 38}h18"/>`);
});

for (let i = 0; i <= 10; i++) {
    support(beamStart(i), true);
    support(along(i, 1), false);
}
support(off(upper(0), 0, 1), false);
support(off(upper(10), 0, 1), false);

for (let i = 0; i <= 10; i++) {
    line(beamStart(i), along(i, 1), '#111', 1.3);
    [0, 1 / 6, .5, .605, 1].forEach(k => mark(along(i, k)));
}

line(upper(0), upper(10), '#111', 1.3);
line(lower(0), lower(9), '#111', 1.3);
line(upper(0), lower(0), '#111', 1.5);
line(lower(9), upper(10), '#111', 1.5);

for (let i = 0; i < 9; i++) {
    line(lower(i), upper(i + 1), '#77779a', .9);
    line(upper(i + 1), lower(i + 1), '#77779a', .9, 'stroke-dasharray="4 1"');
}

[[4, 465, 330], [8, 530, 395]].forEach(([i, foot, low]) => {
    const x = upper(i)[0];
    line(lower(i - 1), [x, low], '#77779a', .9);
    line([x, low], lower(i), '#77779a', .9);
    line(upper(i), [x, foot], '#222', 1.4);
    const mid = off(lower(i), -27.3, -7.5);
    [upper(i), mid].forEach(p => { hinge(p, -3, -1); hinge(p, 3, 1); mark(p); });
    hinge(mid, 0, 3);
    mark([x, low]);
    out.push(`<g fill="#06c42c"><circle cx="${x}" cy="${foot + 4}" r="4"/><path d="M${x - 10} ${foot + 10}l8-4h4l8 4-7 3h-6z"/><path d="M${x - 2} ${foot + 12}h4v7h-4z"/></g>`);
    mark([x, foot]);
});
for (let i = 0; i < 10; i++) {
    mark(lower(i));
    mark(upper(i + 1));
    if (i < 9) mark(off(lower(i), 27.5, 8));
}
hinge(upper(0), 2, 1);
hinge(lower(0), 0, 0);
hinge(upper(10), -2, 1);
hinge(lower(9), 2, -2);

function axes(x, y) {
    const txt = (c, dx, dy, n) => `<text x="${x + dx}" y="${y + dy}" fill="${c}" font-size="8" text-anchor="middle" font-family="Liberation Sans">${n}</text>`;
    out.push(`<g stroke-width="1.300"><path stroke="#1818c8" d="M${x} ${y}v-20"/><path stroke="#e32222" d="M${x} ${y}l-14 5"/><path stroke="#0cae3c" d="M${x} ${y}l14 4"/></g>
        <path fill="#1818c8" d="M${x} ${y - 27}l3 7h-6z"/><path fill="#e32222" d="M${x - 19} ${y + 6}l6-4 1 4z"/><path fill="#078a2c" d="M${x + 20} ${y + 6}l-6-4-2 4z"/>`
        + txt('#2a2ac8', 0, -30, 'Z') + txt('#d33', -24, 10, 'X') + txt('#1db85a', 26, 10, 'Y'));
}
axes(637, 350);
axes(236, 498);

out.push('<text x="201" y="75" font-size="8" font-family="Liberation Sans" fill="#111">Visibility mode</text>');
document.getElementById('model').innerHTML = out.join('');
```
